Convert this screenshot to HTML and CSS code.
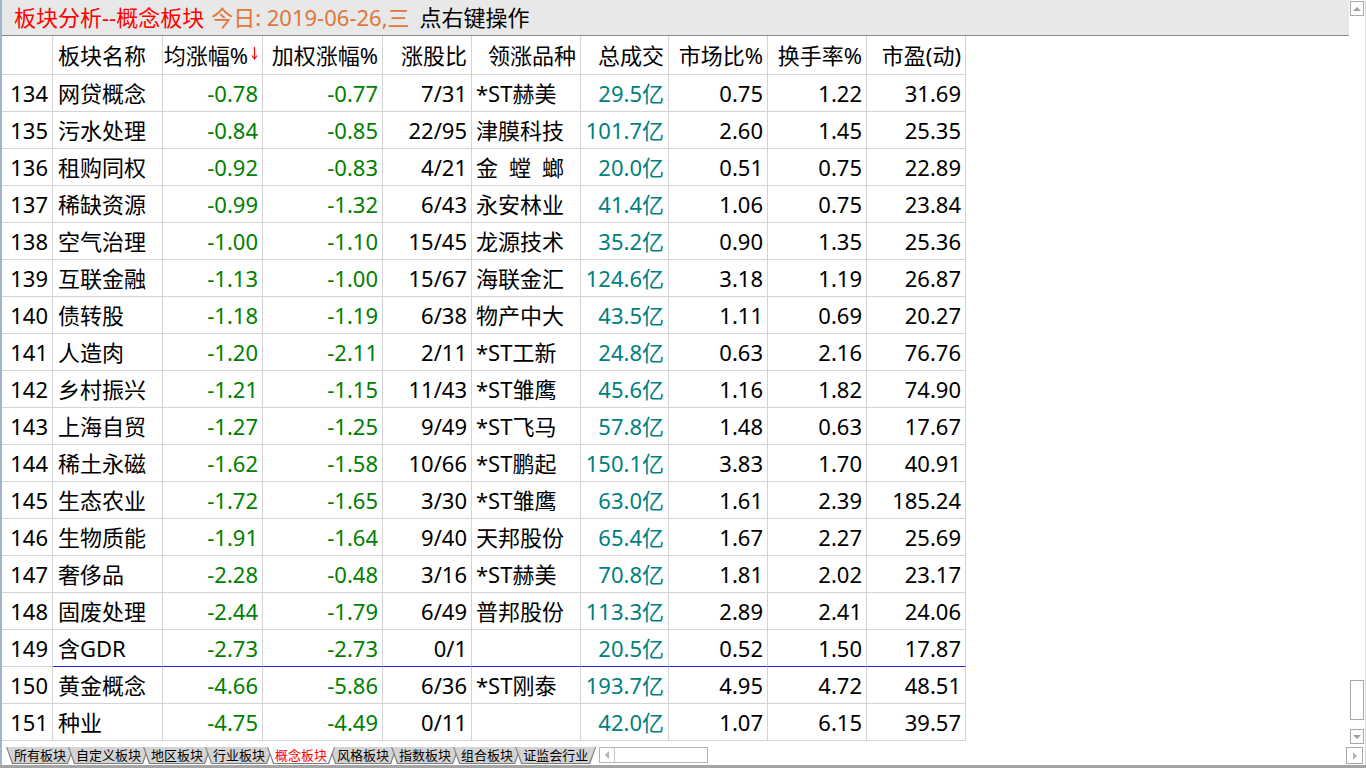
FILE: index.html
```html
<!DOCTYPE html>
<html lang="zh-CN">
<head>
  <meta charset="UTF-8">
  <title>板块分析</title>
  <link rel="stylesheet" href="styles.css">
</head>
<body>

<div class="window">
  <div class="body">
    <div class="main">
      <div class="titlebar">
        <span class="t-red">板块分析--概念板块</span>
        <span class="t-orange">今日: 2019-06-26,三</span>
        <span class="t-black">点右键操作</span>
      </div>

      <div class="grid">
        <div class="row head">
          <div class="c"></div>
          <div class="c name">板块名称</div>
          <div class="c">均涨幅%<svg class="sort" width="7" height="15" viewBox="0 0 7 15"><path d="M3.5 1V13M1 9.5L3.5 13L6 9.5" fill="none" stroke="#f00" stroke-width="1.2"/></svg></div>
          <div class="c">加权涨幅%</div>
          <div class="c">涨股比</div>
          <div class="c">领涨品种</div>
          <div class="c">总成交</div>
          <div class="c">市场比%</div>
          <div class="c">换手率%</div>
          <div class="c">市盈(动)</div>
        </div>

        <div class="row"><div class="c">134</div><div class="c name">网贷概念</div><div class="c g">-0.78</div><div class="c g">-0.77</div><div class="c">7/31</div><div class="c lead">*ST赫美</div><div class="c t">29.5亿</div><div class="c">0.75</div><div class="c">1.22</div><div class="c">31.69</div></div>
        <div class="row"><div class="c">135</div><div class="c name">污水处理</div><div class="c g">-0.84</div><div class="c g">-0.85</div><div class="c">22/95</div><div class="c lead">津膜科技</div><div class="c t">101.7亿</div><div class="c">2.60</div><div class="c">1.45</div><div class="c">25.35</div></div>
        <div class="row"><div class="c">136</div><div class="c name">租购同权</div><div class="c g">-0.92</div><div class="c g">-0.83</div><div class="c">4/21</div><div class="c lead">金&ensp;螳&ensp;螂</div><div class="c t">20.0亿</div><div class="c">0.51</div><div class="c">0.75</div><div class="c">22.89</div></div>
        <div class="row"><div class="c">137</div><div class="c name">稀缺资源</div><div class="c g">-0.99</div><div class="c g">-1.32</div><div class="c">6/43</div><div class="c lead">永安林业</div><div class="c t">41.4亿</div><div class="c">1.06</div><div class="c">0.75</div><div class="c">23.84</div></div>
        <div class="row"><div class="c">138</div><div class="c name">空气治理</div><div class="c g">-1.00</div><div class="c g">-1.10</div><div class="c">15/45</div><div class="c lead">龙源技术</div><div class="c t">35.2亿</div><div class="c">0.90</div><div class="c">1.35</div><div class="c">25.36</div></div>
        <div class="row"><div class="c">139</div><div class="c name">互联金融</div><div class="c g">-1.13</div><div class="c g">-1.00</div><div class="c">15/67</div><div class="c lead">海联金汇</div><div class="c t">124.6亿</div><div class="c">3.18</div><div class="c">1.19</div><div class="c">26.87</div></div>
        <div class="row"><div class="c">140</div><div class="c name">债转股</div><div class="c g">-1.18</div><div class="c g">-1.19</div><div class="c">6/38</div><div class="c lead">物产中大</div><div class="c t">43.5亿</div><div class="c">1.11</div><div class="c">0.69</div><div class="c">20.27</div></div>
        <div class="row"><div class="c">141</div><div class="c name">人造肉</div><div class="c g">-1.20</div><div class="c g">-2.11</div><div class="c">2/11</div><div class="c lead">*ST工新</div><div class="c t">24.8亿</div><div class="c">0.63</div><div class="c">2.16</div><div class="c">76.76</div></div>
        <div class="row"><div class="c">142</div><div class="c name">乡村振兴</div><div class="c g">-1.21</div><div class="c g">-1.15</div><div class="c">11/43</div><div class="c lead">*ST雏鹰</div><div class="c t">45.6亿</div><div class="c">1.16</div><div class="c">1.82</div><div class="c">74.90</div></div>
        <div class="row"><div class="c">143</div><div class="c name">上海自贸</div><div class="c g">-1.27</div><div class="c g">-1.25</div><div class="c">9/49</div><div class="c lead">*ST飞马</div><div class="c t">57.8亿</div><div class="c">1.48</div><div class="c">0.63</div><div class="c">17.67</div></div>
        <div class="row"><div class="c">144</div><div class="c name">稀土永磁</div><div class="c g">-1.62</div><div class="c g">-1.58</div><div class="c">10/66</div><div class="c lead">*ST鹏起</div><div class="c t">150.1亿</div><div class="c">3.83</div><div class="c">1.70</div><div class="c">40.91</div></div>
        <div class="row"><div class="c">145</div><div class="c name">生态农业</div><div class="c g">-1.72</div><div class="c g">-1.65</div><div class="c">3/30</div><div class="c lead">*ST雏鹰</div><div class="c t">63.0亿</div><div class="c">1.61</div><div class="c">2.39</div><div class="c">185.24</div></div>
        <div class="row"><div class="c">146</div><div class="c name">生物质能</div><div class="c g">-1.91</div><div class="c g">-1.64</div><div class="c">9/40</div><div class="c lead">天邦股份</div><div class="c t">65.4亿</div><div class="c">1.67</div><div class="c">2.27</div><div class="c">25.69</div></div>
        <div class="row"><div class="c">147</div><div class="c name">奢侈品</div><div class="c g">-2.28</div><div class="c g">-0.48</div><div class="c">3/16</div><div class="c lead">*ST赫美</div><div class="c t">70.8亿</div><div class="c">1.81</div><div class="c">2.02</div><div class="c">23.17</div></div>
        <div class="row"><div class="c">148</div><div class="c name">固废处理</div><div class="c g">-2.44</div><div class="c g">-1.79</div><div class="c">6/49</div><div class="c lead">普邦股份</div><div class="c t">113.3亿</div><div class="c">2.89</div><div class="c">2.41</div><div class="c">24.06</div></div>
        <div class="row split"><div class="c">149</div><div class="c name">含GDR</div><div class="c g">-2.73</div><div class="c g">-2.73</div><div class="c">0/1</div><div class="c lead"></div><div class="c t">20.5亿</div><div class="c">0.52</div><div class="c">1.50</div><div class="c">17.87</div></div>
        <div class="row"><div class="c">150</div><div class="c name">黄金概念</div><div class="c g">-4.66</div><div class="c g">-5.86</div><div class="c">6/36</div><div class="c lead">*ST刚泰</div><div class="c t">193.7亿</div><div class="c">4.95</div><div class="c">4.72</div><div class="c">48.51</div></div>
        <div class="row"><div class="c">151</div><div class="c name">种业</div><div class="c g">-4.75</div><div class="c g">-4.49</div><div class="c">0/11</div><div class="c lead"></div><div class="c t">42.0亿</div><div class="c">1.07</div><div class="c">6.15</div><div class="c">39.57</div></div>
      </div>

      <div class="tabbar">
        <div class="tab"><span>所有板块</span></div>
        <div class="tab"><span>自定义板块</span></div>
        <div class="tab"><span>地区板块</span></div>
        <div class="tab"><span>行业板块</span></div>
        <div class="tab active"><span>概念板块</span></div>
        <div class="tab"><span>风格板块</span></div>
        <div class="tab"><span>指数板块</span></div>
        <div class="tab"><span>组合板块</span></div>
        <div class="tab"><span>证监会行业</span></div>
        <div class="hscroll">
          <div class="hs-btn"><i class="tri-left"></i></div>
        </div>
      </div>
    </div>

    <div class="vscroll">
      <div class="sbtn"><i class="tri-up"></i></div>
      <div class="spacer"></div>
      <div class="thumb"></div>
      <div class="sbtn down"><i class="tri-down"></i></div>
      <div class="sbtn right"><i class="tri-right"></i></div>
    </div>
  </div>
  <div class="status"></div>
</div>

</body>
</html>
```

FILE: styles.css
```css
body {
  margin: 0;
  background: #fff;
  font-family: "Noto Sans", "Noto Sans CJK SC", sans-serif;
  color: #000;
}

.window {
  width: 1366px;
  height: 768px;
  display: flex;
  flex-direction: column;
  overflow: hidden;
}

.body {
  display: flex;
  height: 765px;
}

.main {
  flex: 1;
  display: flex;
  flex-direction: column;
  border-left: 2px solid #9fb3cc;
  min-width: 0;
}

/* title bar */
.titlebar {
  height: 35px;
  line-height: 35px;
  background: #e8e8e8;
  border-bottom: 1px solid #8a8a8a;
  padding-left: 12px;
  font-size: 22px;
  white-space: nowrap;
  display: flex;
}

.t-red {
  color: #f00;
}

.t-orange {
  color: #e0763a;
  margin-left: 7px;
}

.t-black {
  margin-left: 10px;
}

/* table */
.grid {
  width: 964px;
}

.row {
  display: grid;
  grid-template-columns: 51px 110px 100px 120px 89px 109px 88px 99px 99px 99px;
}

.c {
  box-sizing: border-box;
  height: 37px;
  line-height: 37px;
  padding: 0 4px 0 0;
  border-right: 1px solid #d4d4d4;
  border-bottom: 1px solid #d4d4d4;
  text-align: right;
  font-size: 22px;
  white-space: nowrap;
  overflow: hidden;
}

.head .c {
  height: 39px;
  line-height: 38px;
}

.c.name {
  text-align: left;
  padding: 0 0 0 5px;
}

.c.lead {
  text-align: left;
  padding: 0 0 0 4px;
}

.c.g {
  color: #008000;
}

.c.t {
  color: #008080;
}

.split .c + .c {
  border-bottom-color: #2424e0;
}

.sort {
  vertical-align: 3px;
  margin-left: 3px;
}

/* sheet tabs */
.tabbar {
  height: 24px;
  box-sizing: border-box;
  padding: 6px 0 0 4px;
  display: flex;
  align-items: flex-start;
}

.tab {
  position: relative;
  height: 17px;
  margin-right: -6px;
  background: #7c7c7c;
  clip-path: polygon(0 0, 100% 0, calc(100% - 6px) 100%, 6px 100%);
}

.tab span {
  display: block;
  height: 16px;
  margin: 0 1px;
  padding: 0 7px;
  line-height: 16px;
  font-size: 13px;
  background: #d4d4d4;
  clip-path: polygon(0 0, 100% 0, calc(100% - 6px) 100%, 6px 100%);
}

.tab.active {
  z-index: 5;
}

.tab.active span {
  background: #fff;
  color: #f00;
}

.hscroll {
  width: 109px;
  height: 16px;
  box-sizing: border-box;
  margin-left: 9px;
  border: 1px solid #b4b4b4;
  background: #fff;
}

.hs-btn {
  width: 14px;
  height: 14px;
  border-right: 1px solid #c8c8c8;
  display: flex;
  align-items: center;
  justify-content: center;
}

/* vertical scrollbar */
.vscroll {
  width: 17px;
  box-sizing: border-box;
  border-right: 1px solid #dadada;
  display: flex;
  flex-direction: column;
  padding: 1px 0 1px 1px;
}

.sbtn {
  width: 14px;
  height: 15px;
  box-sizing: border-box;
  border: 1px solid #a8a8a8;
  background: #fff;
  display: flex;
  align-items: center;
  justify-content: center;
}

.spacer {
  flex: 1;
}

.thumb {
  width: 14px;
  height: 40px;
  box-sizing: border-box;
  border: 1px solid #a8a8a8;
  margin-bottom: 9px;
}

.sbtn.down {
  margin-bottom: 3px;
}

.sbtn.right {
  width: 17px;
  height: 17px;
  margin-left: -4px;
}

.tri-up, .tri-down, .tri-left, .tri-right {
  width: 0;
  height: 0;
  border: 4px solid transparent;
}

.tri-up {
  border-bottom-color: #a0a0a0;
  border-top-width: 0;
}

.tri-down {
  border-top-color: #a0a0a0;
  border-bottom-width: 0;
}

.tri-left {
  border-right-color: #b0b0b0;
  border-left-width: 0;
}

.tri-right {
  border-left-color: #b0b0b0;
  border-right-width: 0;
}

.status {
  height: 3px;
  background: #a4a4a4;
}
```
